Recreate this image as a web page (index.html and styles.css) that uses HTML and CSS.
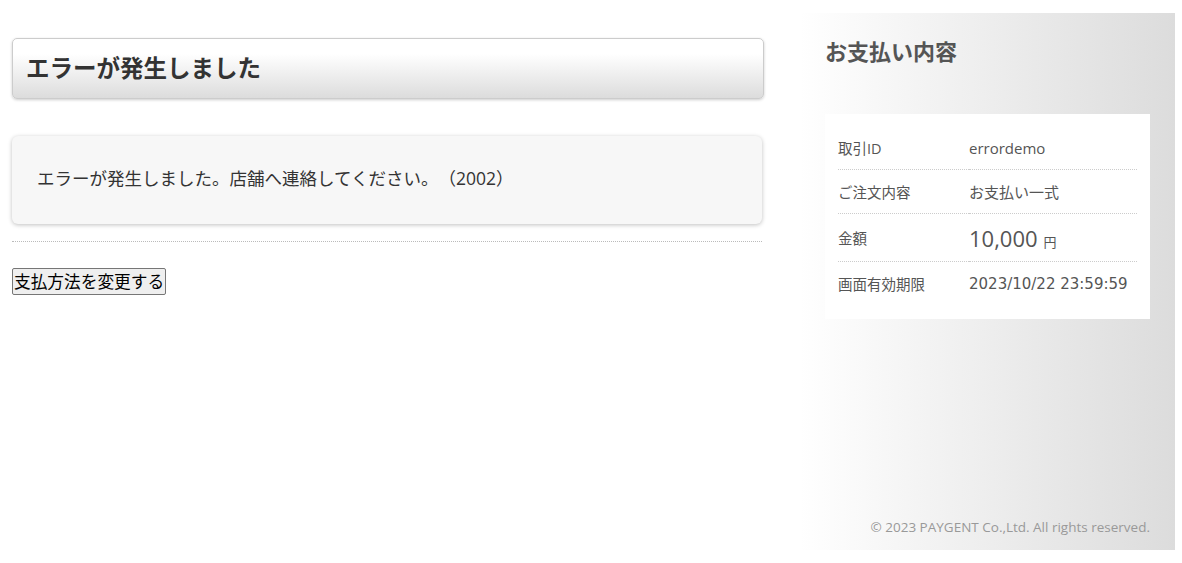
FILE: index.html
```html
<!DOCTYPE html>
<html lang="ja">
<head>
  <meta charset="UTF-8" />
  <title>エラー</title>
  <link rel="stylesheet" href="styles.css">
</head>
<body>

  <div class="wrapper">
    <div class="main">
      <h1 class="page-title">エラーが発生しました</h1>

      <div class="error-box">
        <p>エラーが発生しました。店舗へ連絡してください。（2002）</p>
      </div>

      <hr class="divider" />

      <button type="button" class="back-button">支払方法を変更する</button>
    </div>

    <div class="side">
      <h2 class="side-title">お支払い内容</h2>

      <table class="summary">
        <tr>
          <th>取引ID</th>
          <td>errordemo</td>
        </tr>
        <tr>
          <th>ご注文内容</th>
          <td>お支払い一式</td>
        </tr>
        <tr class="amount-row">
          <th>金額</th>
          <td><span class="amount">10,000</span> <span class="yen">円</span></td>
        </tr>
        <tr>
          <th>画面有効期限</th>
          <td class="expire">2023/10/22 23:59:59</td>
        </tr>
      </table>

      <p class="copyright">© 2023 PAYGENT Co.,Ltd. All rights reserved.</p>
    </div>
  </div>

</body>
</html>
```

FILE: styles.css
```css
body {
  margin: 0;
  font-family: "Open Sans", "Noto Sans CJK JP", sans-serif;
  color: #333;
  background-color: #fff;
  text-spacing-trim: space-all;
}
.wrapper {
  display: flex;
  padding: 13px 7px 13px 12px;
}
.main {
  width: 752px;
}
.page-title {
  margin: 25px 0 0;
  height: 59px;
  padding: 0 13px;
  font-size: 23.5px;
  font-weight: bold;
  line-height: 59px;
  color: #333;
  border: 1px solid #ccc;
  border-radius: 5px;
  background: linear-gradient(#fff 25%, #dcdcdc);
  box-shadow: 0 1px 3px rgba(0, 0, 0, 0.2);
}
.error-box {
  margin: 37px 2px 0 0;
  height: 82px;
  padding: 0 25px 6px;
  display: flex;
  align-items: center;
  background-color: #f7f7f7;
  border-radius: 6px;
  box-shadow: 0 1px 4px rgba(0, 0, 0, 0.25);
}
.error-box p {
  margin: 0;
  font-size: 17.5px;
  color: #333;
}
.divider {
  margin: 17px 2px 0 0;
  border: none;
  border-top: 1px dotted #bbb;
}
.back-button {
  margin-top: 26px;
  height: 27px;
  padding: 0 1px;
  font-family: "Noto Sans CJK JP", sans-serif;
  font-size: 16.7px;
  line-height: 25px;
  color: #000;
  background-color: #efefef;
  border: 1px solid #767676;
  border-radius: 2px;
}
.side {
  margin-left: 36px;
  width: 375px;
  height: 537px;
  padding: 0 25px 0 25px;
  box-sizing: border-box;
  display: flex;
  flex-direction: column;
  background: linear-gradient(to right, #fff, #dcdcdc);
}
.side-title {
  margin: 24px 0 0;
  font-size: 22px;
  font-weight: bold;
  line-height: 28px;
  color: #555;
}
.summary {
  margin-top: 49px;
  width: 325px;
  padding: 12px 13px 14px;
  background-color: #fff;
  border-collapse: separate;
  border-spacing: 0;
}
.summary th,
.summary td {
  height: 43px;
  padding: 0;
  font-weight: normal;
  text-align: left;
  color: #555;
  border-bottom: 1px dotted #ccc;
}
.summary th {
  width: 131px;
  font-size: 14.5px;
}
.summary td {
  font-size: 15px;
}
.summary td.expire {
  font-family: "DejaVu Sans", sans-serif;
  font-size: 15px;
}
.summary tr:last-child th,
.summary tr:last-child td {
  border-bottom: none;
}
.amount-row th,
.amount-row td {
  height: 47px;
}
.amount {
  font-size: 22px;
}
.yen {
  margin-left: 2px;
  font-size: 13px;
}
.copyright {
  margin: auto 0 14px;
  font-size: 13.5px;
  text-align: right;
  color: #999;
}
```
